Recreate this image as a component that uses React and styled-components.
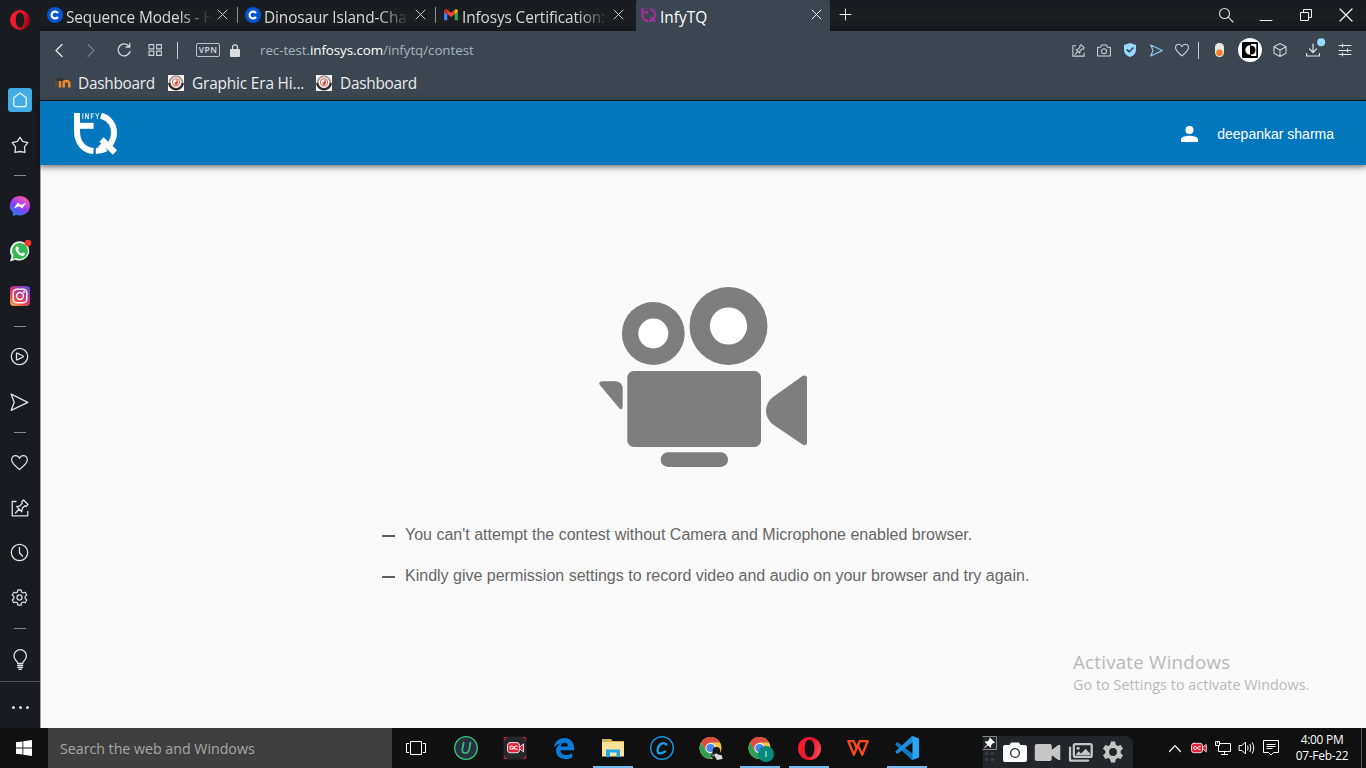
import React from "react";
import styled, { createGlobalStyle, css } from "styled-components";

const ui = `"Open Sans", "Noto Sans", sans-serif`;
const arial = `"Liberation Sans", Arial, sans-serif`;

const Global = createGlobalStyle`
  * { box-sizing: border-box; }
  html, body { margin: 0; padding: 0; background: #101010; overflow: hidden; }
  ul { list-style: none; margin: 0; padding: 0; }
`;

const Screen = styled.div`
  width: 1366px;
  height: 768px;
  display: flex;
  flex-direction: column;
  font-family: ${ui};
  overflow: hidden;
`;
const Browser = styled.div`
  display: flex;
  height: 728px;
  position: relative;
`;
const Glyph = styled.svg`
  display: block;
  flex: none;
  overflow: visible;
  width: ${(p) => p.$w || 16}px;
  height: ${(p) => p.$h || p.$w || 16}px;
  fill: none;
  stroke: ${(p) => p.$c || "none"};
  stroke-width: ${(p) => p.$s || 1.2};
  stroke-linejoin: ${(p) => (p.$sharp ? "miter" : "round")};
  stroke-linecap: ${(p) => (p.$sharp ? "butt" : "round")};
`;

/* ---------- sidebar ---------- */
const Sidebar = styled.nav`
  width: 40px;
  flex: none;
  background: #181b1f;
  display: flex;
  flex-direction: column;
`;
const OperaSlot = styled.div`
  height: 77px;
  padding: 10px 0 0 10px;
`;
const SideSlot = styled.div`
  height: 45px;
  padding: ${(p) => p.$top || 11}px 0 0 ${(p) => p.$left || 8}px;
`;
const SideRule = styled.div`
  height: 16px;
  padding: 8px 0 0 14px;
  &::before { content: ""; display: block; width: 12px; height: 1px; background: #7b8b99; }
`;
const HomeTile = styled.div`
  width: 24px;
  height: 24px;
  border-radius: 3px;
  background: #41ade4;
  display: flex;
  align-items: center;
  justify-content: center;
`;
const MoreSlot = styled.div`
  border-top: 1px solid #4b4f53;
  flex: 1;
  display: flex;
  gap: 4px;
  padding: 24px 0 0 12px;
  i { width: 3px; height: 3px; border-radius: 1.5px; background: #dce1e6; }
`;

/* ---------- tabs ---------- */
const Column = styled.div`
  flex: 1;
  min-width: 0;
  display: flex;
  flex-direction: column;
`;
const TabBar = styled.div`
  height: 31px;
  flex: none;
  display: flex;
  background: linear-gradient(#181b1f, #1b1f22 60%, #15181b);
`;
const Tab = styled.div`
  width: ${(p) => p.$w}px;
  height: 31px;
  flex: none;
  display: flex;
  padding: 7px 0 0 ${(p) => p.$pl}px;
  ${(p) => p.$active && css`background: #3b4650; border-radius: 2px 2px 0 0;`}
`;
const TabTitle = styled.div`
  width: ${(p) => p.$w}px;
  margin: 0 0 0 ${(p) => p.$ml || 3}px;
  height: 22px;
  line-height: 21px;
  font-size: 15.4px;
  letter-spacing: ${(p) => p.$ls || 0}px;
  white-space: nowrap;
  color: ${(p) => (p.$active ? "#fff" : "#d6d7d8")};
  ${(p) => !p.$active && css`mask-image: linear-gradient(90deg, #000 calc(100% - 32px), transparent);`}
`;
const TabClose = styled.div`
  margin: 3px 0 0 ${(p) => p.$ml}px;
`;
const TabSplit = styled.div`
  width: 1px;
  height: 16px;
  margin-top: 7px;
  background: #8b9298;
`;
const NewTab = styled.div`
  padding: 9px 0 0 10px;
`;
const WindowControls = styled.div`
  margin-left: auto;
  display: flex;
`;
const Control = styled.div`
  width: 40px;
  height: 30px;
  display: flex;
  align-items: center;
  justify-content: center;
  padding-bottom: ${(p) => p.$up || 0}px;
  padding-top: ${(p) => p.$down || 0}px;
`;

/* ---------- toolbar ---------- */
const Toolbar = styled.div`
  height: 38px;
  flex: none;
  background: #3b4650;
  display: flex;
  align-items: center;
  padding: 0 6px 0 3px;
`;
const Cell = styled.div`
  width: ${(p) => p.$w || 32}px;
  height: 38px;
  display: flex;
  flex: none;
  align-items: center;
  justify-content: center;
`;
const Split = styled.div`
  width: 1px;
  height: 17px;
  flex: none;
  background: #c4cacf;
  margin: 1px ${(p) => p.$mr}px 0 ${(p) => p.$ml}px;
`;
const Vpn = styled.div`
  width: 24px;
  height: 14px;
  border: 1px solid #b9c0c6;
  border-radius: 2px;
  color: #d7dce0;
  font-size: 8.5px;
  font-weight: 600;
  line-height: 12px;
  text-align: center;
  letter-spacing: 0.5px;
`;
const Address = styled.div`
  font-size: 13.4px;
  line-height: 20px;
  margin-left: 10px;
  letter-spacing: -0.08px;
  white-space: nowrap;
  color: #a7b3be;
  b { font-weight: 400; color: #fff; }
`;
const ToolbarRight = styled.div`
  margin-left: auto;
  display: flex;
  align-items: center;
`;
const Bookmarks = styled.div`
  height: 32px;
  flex: none;
  background: #3b4650;
  border-bottom: 1px solid #15171a;
  display: flex;
  padding: 5px 0 0 15px;
`;
const Bookmark = styled.div`
  display: flex;
  width: ${(p) => p.$w}px;
  gap: ${(p) => p.$gap || 8}px;
  font-size: 15.4px;
  line-height: 20px;
  letter-spacing: ${(p) => p.$ls}px;
  color: #e9ebec;
  white-space: nowrap;
  svg { margin-top: 1px; }
`;

/* ---------- page ---------- */
const Page = styled.main`
  flex: 1;
  display: flex;
  flex-direction: column;
  background: #fafafa;
  border-left: 1px solid #a3a3a3;
`;
const Header = styled.header`
  height: 64px;
  flex: none;
  margin-left: -1px;
  display: flex;
  align-items: center;
  padding: 1px 32px 0 33px;
  background: #0277bd;
  box-shadow: 0 2px 5px rgba(0, 0, 0, 0.45), 0 3px 10px rgba(0, 0, 0, 0.15);
`;
const User = styled.div`
  margin-left: auto;
  display: flex;
  align-items: center;
  gap: 19px;
  color: #fff;
  font: 14px/20px ${arial};
  span { padding-top: 1px; }
`;
const Notice = styled.section`
  display: flex;
  flex-direction: column;
  padding: 121px 0 0 341px;
`;
const Reasons = styled.ul`
  padding-top: 55px;
`;
const Reason = styled.li`
  display: flex;
  align-items: center;
  gap: 10px;
  height: 23px;
  margin-bottom: 18px;
  font: 16px/23px ${arial};
  color: #666;
  &::before { content: ""; width: 13px; height: 2px; margin-top: 2px; background: #5f5f5f; }
`;
const CameraBox = styled.div`
  padding-left: 217px;
`;
const Watermark = styled.div`
  position: absolute;
  left: 1073px;
  top: 649px;
  color: #b9b9b9;
  white-space: nowrap;
`;
const WatermarkTitle = styled.div`
  font-size: 18.7px;
  line-height: 26px;
  letter-spacing: 0.25px;
`;
const WatermarkText = styled.div`
  font-size: 14.3px;
  line-height: 20px;
  letter-spacing: 0.06px;
`;

/* ---------- taskbar ---------- */
const Taskbar = styled.footer`
  height: 40px;
  display: flex;
  background: #101010;
`;
const TaskCell = styled.div`
  width: ${(p) => p.$w || 48}px;
  margin-right: ${(p) => p.$mr || 0}px;
  height: 40px;
  flex: none;
  display: flex;
  align-items: center;
  justify-content: center;
  ${(p) => p.$running && css`
    background: linear-gradient(#76b9ed, #76b9ed) center bottom / 40px 2px no-repeat;
  `}
`;
const Search = styled.div`
  width: 344px;
  background: #3f3f3f;
  color: #a6a6a6;
  font-size: 14.2px;
  line-height: 42px;
  height: 40px;
  padding-left: 12px;
`;
const CaptureBar = styled.div`
  width: 150px;
  height: 32px;
  margin: 8px 0 0 51px;
  display: flex;
  align-items: center;
  background: #22262b;
  border-radius: 0 8px 0 0;
`;
const CapturePin = styled.div`
  width: 14px;
  height: 32px;
  margin-right: 6px;
`;
const CaptureCell = styled.div`
  width: ${(p) => p.$w}px;
  display: flex;
  justify-content: center;
`;
const Tray = styled.div`
  display: flex;
  padding-left: 30px;
`;
const Clock = styled.div`
  width: 78px;
  padding-top: 3px;
  text-align: center;
  color: #fff;
  font-size: 11.9px;
  line-height: 16px;
  letter-spacing: -0.25px;
`;
const ShowDesktop = styled.div`
  width: 1px;
  height: 40px;
  background: #5c5c5c;
`;

/* ---------- drawings ---------- */
const Close = ({ c = "#c9cccf", w = 9 }) => (
  <Glyph viewBox="0 0 10 10" $w={w} $c={c} $s={1.1}><path d="M0 0L10 10M10 0L0 10" /></Glyph>
);
const OperaLogo = ({ size, id }) => (
  <Glyph viewBox="0 0 20 20" $w={size}>
    <defs>
      <linearGradient id={id} x1="0" x2="1" y1="0.3" y2="0.6">
        <stop offset="0" stopColor="#ff1b2d" /><stop offset="0.55" stopColor="#e0162a" /><stop offset="1" stopColor={id === "op1" ? "#9c0010" : "#ff4b55"} />
      </linearGradient>
    </defs>
    <path fill={`url(#${id})`} fillRule="evenodd" d="M10 0a10 10 0 1 0 0 20a10 10 0 1 0 0-20zM10 2.4c2.6 0 4.2 3.4 4.2 7.6s-1.600 7.600-4.200 7.600s-4.200-3.400-4.200-7.600s1.600-7.600 4.200-7.600z" />
  </Glyph>
);
const Heart = ({ w, c, s }) => (
  <Glyph viewBox="0 0 18 18" $w={w} $c={c} $s={s}>
    <path d="M9 16.500C5.500 13.500 .7 10.300.7 6.200C.7 3.400 2.700 1.700 4.800 1.700C6.800 1.700 8.300 2.900 9 4.600C9.700 2.900 11.200 1.700 13.200 1.700C15.300 1.700 17.300 3.400 17.300 6.200C17.300 10.300 12.500 13.500 9 16.500Z" />
  </Glyph>
);
const PinBox = ({ w, c, s }) => (
  <Glyph viewBox="0 0 18 18" $w={w} $c={c} $s={s}>
    <path d="M5 2.500H1.200V16.800H16.800V12.500" />
    <path d="M4.500 14L8 10.200M5.700 7.600L10.700 12.700L11.300 9.300L13.600 7L15.200 7.300L17 5.500L12.500 1L10.800 2.700L11.100 4.400L8.900 6.800Z" />
  </Glyph>
);
const Send = ({ w, c, s }) => (
  <Glyph viewBox="0 0 18 18" $w={w} $c={c} $s={s}><path d="M1 1.500L17.200 9L1 16.500L4.200 9Z" /></Glyph>
);
const Coursera = () => (
  <Glyph viewBox="0 0 16 16">
    <circle cx="8" cy="8" r="8" fill="#0056d2" />
    <path d="M10.900 6.200A3.400 3.400 0 1 0 10.900 9.800" stroke="#fff" strokeWidth="2.200" strokeLinecap="butt" />
  </Glyph>
);
const Gmail = () => (
  <Glyph viewBox="0 0 16 14" $w={14} $h={12}>
    <path d="M0 3V13.200H3.700V6Z" fill="#4285f4" /><path d="M16 3V13.200H12.300V6Z" fill="#34a853" />
    <path d="M0 2.500C0 0 2.500-.3 3.700 1L8 4.400L12.300 1V6L8 9.300L3.700 6L0 3.200Z" fill="#ea4335" />
    <path d="M12.300 1C13.500-.3 16 0 16 2.500V3.200L12.300 6Z" fill="#fbbc04" />
    <path d="M0 2.500C0 1.200.8.500 1.800.4L3.700 1V6L0 3.200Z" fill="#c5221f" />
  </Glyph>
);
const TqMark = ({ w, h, c }) => (
  <Glyph viewBox="0 0 44 41" $w={w} $h={h} $c={c} $s={6} $sharp>
    <path d="M4 0V18C4 30 11 37.200 20.500 38" />
    <path d="M4 12.800H20.600" />
    <path d="M28 2.700C36.500 5.500 41 12 41 19.500C41 24.500 39.500 28.500 36.500 32" />
    <path d="M22.800 38C27 38 30 37 33 35.500M28.500 26.500L42 39.500M27 36L33.500 30" />
    <path strokeWidth="1.100" strokeOpacity="0.8" d="M9.800 .3V6M12.600 6V.3L15.400 6V.3M18.300 6V.8H21M18.300 3.200H20.600M22.500.3L24.300 3.200L26.100.3M24.300 3V6" />
  </Glyph>
);
const Seal = () => (
  <Glyph viewBox="0 0 16 16">
    <path fill="#f6f4f2" d="M0 0H16V16H0Z" />
    <circle cx="8" cy="7.500" r="6.300" stroke="#a39a96" strokeWidth="1.800" />
    <path d="M1.300 9Q3 14.300 8 14.300T14.700 9" stroke="#2f2b29" strokeWidth="2.400" />
    <circle cx="8" cy="7.300" r="3.600" stroke="#cf7767" strokeWidth="1.100" />
    <path d="M8.500 4C10.800 6.500 10.400 8.500 8 10.300C5.700 8.500 6.600 7 7.500 7.300C8.600 6.500 8.800 5.500 8.500 4Z" fill="#d6472a" />
  </Glyph>
);
const Moodle = () => (
  <Glyph viewBox="0 0 16 16" $sharp>
    <path d="M0 4.500L7 2.500L9 5L4 6.500Z" fill="#3a332f" />
    <path d="M1 6V11" stroke="#725b45" strokeWidth="1" />
    <path d="M5 12.500V6M8.700 12.500V8Q8.700 6 11.200 6T14.300 8V12.500" stroke="#ee8a2b" strokeWidth="2.500" />
  </Glyph>
);
const GearShape = ({ w, c, s }) => (
  <Glyph viewBox="0 0 18 18" $w={w} $c={c} $s={s}>
    <path d="M7.300 1H10.700L11.100 3.200L12.900 4.200L15 3.400L16.700 6.300L15 7.800V10.200L16.700 11.700L15 14.600L12.900 13.800L11.100 14.800L10.700 17H7.300L6.900 14.800L5.100 13.800L3 14.600L1.300 11.700L3 10.200V7.800L1.300 6.300L3 3.400L5.100 4.200L6.900 3.200Z" />
    <circle cx="9" cy="9" r="2.700" />
  </Glyph>
);
const ChromeLogo = ({ children }) => (
  <Glyph viewBox="0 0 24 24" $w={24}>
    <circle cx="11.500" cy="12" r="11" fill="#f6c443" />
    <path d="M11.500 12V6.500H21A11 11 0 0 0 2 6.500L6.700 14.700Z" fill="#dd4b3e" />
    <path d="M2 6.500A11 11 0 0 0 11.500 23L16.200 14.700L11.500 17L6.700 14.700Z" fill="#2f9e56" />
    <circle cx="11.500" cy="12" r="5.200" fill="#f1f1f1" /><circle cx="11.500" cy="12" r="4.100" fill="#4788f0" />
    {children}
  </Glyph>
);
const RedCamShape = () => (
  <g strokeLinejoin="round">
    <path d="M11 6L15.300 2.500V9.500Z" fill="#e5233d" stroke="#fff" strokeWidth=".8" />
    <rect x=".5" y="1.300" width="11" height="9.400" rx="2.400" fill="#e5233d" stroke="#fff" strokeWidth=".8" />
    <path d="M9.300 4.500Q7.400 4.400 6.300 6Q5.300 7.500 4.200 7.500A1.500 1.500 0 0 1 4.200 4.500Q5.300 4.500 6.300 6Q7.400 7.600 9.300 7.500" stroke="#fff" strokeWidth="1" />
  </g>
);

const side = "#dce2e7";

function SidebarPanel() {
  return (
    <Sidebar>
      <OperaSlot><OperaLogo size={20} id="op1" /></OperaSlot>
      <SideSlot>
        <HomeTile>
          <Glyph viewBox="0 0 16 16" $w={16} $c="#e6f6ff" $s={1.300}><path d="M8 1L14.300 5.800V12.500Q14.300 14.700 12.200 14.700H3.800Q1.700 14.700 1.700 12.500V5.800Z" /></Glyph>
        </HomeTile>
      </SideSlot>
      <SideSlot><Glyph viewBox="0 0 24 24" $w={24} $c={side} $s={1.300}><path d="M12 4.300L14.700 8.300L19.800 9.700L16.500 13.900L17 19.300L12 18.500L7 19.300L7.500 13.900L4.200 9.700L9.300 8.300Z" /></Glyph></SideSlot>
      <SideRule />
      <SideSlot>
        <Glyph viewBox="0 0 24 24" $w={24}>
          <defs><linearGradient id="ms" x1="0.200" y1="1" x2="0.800" y2="0"><stop offset="0" stopColor="#1688f5" /><stop offset=".45" stopColor="#8c3df5" /><stop offset=".75" stopColor="#d84bd2" /><stop offset="1" stopColor="#f8637a" /></linearGradient></defs>
          <path fill="url(#ms)" d="M12 2A10 9.700 0 1 1 8.500 20.800L5 22V18.800A10 9.700 0 0 1 12 2Z" />
          <path fill="#fff" d="M5.800 14.500L9.800 8.500L13 11L18.200 8.700L14.200 14.500L11 12.300Z" />
        </Glyph>
      </SideSlot>
      <SideSlot>
        <Glyph viewBox="0 0 24 24" $w={24}>
          <path fill="#e9efec" d="M12.300 2.200A9.700 9.700 0 1 1 7.500 20.700L2 22.500L3.500 17A9.700 9.700 0 0 1 12.300 2.200Z" />
          <path fill="#35b954" d="M12.300 4A8 8 0 1 1 8 19L4.700 20L5.500 16.500A8 8 0 0 1 12.300 4Z" />
          <path fill="#fff" d="M8.700 7.500L10.200 7.800L11 10L10 11.200Q11.500 14 13.700 14.600L15 13.400L17 14.600Q16.500 17 14.500 17Q9.500 16.300 7.500 10.500Q7.300 8.500 8.700 7.500Z" />
          <circle cx="20" cy="4" r="3.300" fill="#f8352f" />
        </Glyph>
      </SideSlot>
      <SideSlot>
        <Glyph viewBox="0 0 24 24" $w={24}>
          <defs><linearGradient id="ig" x1="0" y1="1" x2="0.700" y2="0"><stop offset="0" stopColor="#fdc04f" /><stop offset=".35" stopColor="#ee4a45" /><stop offset=".7" stopColor="#c4318c" /><stop offset="1" stopColor="#6b4bd0" /></linearGradient></defs>
          <rect x="2" y="2" width="20" height="20" rx="4" fill="url(#ig)" />
          <rect x="5.200" y="5.200" width="13.600" height="13.600" rx="3.800" stroke="#fff" strokeWidth="1.500" />
          <circle cx="12" cy="12" r="3.400" stroke="#fff" strokeWidth="1.500" /><circle cx="16" cy="8" r="1" fill="#fff" />
        </Glyph>
      </SideSlot>
      <SideRule />
      <SideSlot><Glyph viewBox="0 0 24 24" $w={24} $c={side} $s={1.300}><circle cx="11.500" cy="11.500" r="8.200" /><path d="M8.500 8.500Q8.500 7.900 9.200 8.200L15 11Q15.700 11.500 15 12L9.200 14.800Q8.500 15.100 8.500 14.500Z" /></Glyph></SideSlot>
      <SideSlot><Glyph viewBox="0 0 24 24" $w={24} $c={side} $s={1.300}><path d="M3.200 4.200L19.800 12.300L3.200 20.300L6.200 12.300Z" /></Glyph></SideSlot>
      <SideRule />
      <SideSlot $top={14} $left={11}><Heart w={17} c={side} s={1.300} /></SideSlot>
      <SideSlot $top={14} $left={11}><PinBox w={18} c={side} s={1.300} /></SideSlot>
      <SideSlot><Glyph viewBox="0 0 24 24" $w={24} $c={side} $s={1.300}><circle cx="11.500" cy="11.500" r="8.200" /><path d="M11.500 6.500V12L14.500 15" /></Glyph></SideSlot>
      <SideSlot $top={14} $left={11}><GearShape w={17} c={side} s={1.300} /></SideSlot>
      <SideRule />
      <SideSlot $top={12}><Glyph viewBox="0 0 24 24" $w={24} $c={side} $s={1.300}><path d="M9.700 15.500Q9.700 14 7.800 12.200A6.200 6.200 0 1 1 16.600 12.200Q14.700 14 14.700 15.500ZM9.700 17.500H14.700M9.900 19.500H14.500M11 21.300H13.400" /></Glyph></SideSlot>
      <MoreSlot><i /><i /><i /></MoreSlot>
    </Sidebar>
  );
}

function Tabs() {
  return (
    <TabBar>
      <Tab $w={197} $pl={7}><Coursera /><TabTitle $w={146} $ls={-0.12}>Sequence Models - H</TabTitle><TabClose $ml={6}><Close /></TabClose></Tab>
      <TabSplit />
      <Tab $w={197} $pl={7}><Coursera /><TabTitle $w={146} $ls={-0.12}>Dinosaur Island-Cha</TabTitle><TabClose $ml={6}><Close /></TabClose></Tab>
      <TabSplit />
      <Tab $w={200} $pl={8}><div style={{ paddingTop: 2 }}><Gmail /></div><TabTitle $w={147} $ml={4} $ls={-0.12}>Infosys Certification:</TabTitle><TabClose $ml={5}><Close /></TabClose></Tab>
      <Tab $w={194} $pl={5} $active><TqMark w={15} h={16} c="#a52fa0" /><TabTitle $w={147} $ml={4} $active $ls={0.05}>InfyTQ</TabTitle><TabClose $ml={5}><Close c="#eef0f1" /></TabClose></Tab>
      <NewTab><Glyph viewBox="0 0 11 11" $w={11} $c="#eceeef" $s={1}><path d="M5.500 0V11M0 5.500H11" /></Glyph></NewTab>
      <WindowControls>
        <Control $up={1}><Glyph viewBox="0 0 14 14" $w={14} $c="#dfe2e4" $s={1.100}><circle cx="5.500" cy="5.500" r="5" /><path d="M9.200 9.200L14 14" /></Glyph></Control>
        <Control><Glyph viewBox="0 0 12 12" $w={12} $c="#eceeef" $s={1}><path d="M0 11.500H12" /></Glyph></Control>
        <Control><Glyph viewBox="0 0 12 12" $w={12} $c="#eceeef" $s={1} $sharp><path d="M.5 3.500H8.500V11.500H.5ZM3.500 3V.5H11.500V8.500H9" /></Glyph></Control>
        <Control><Close c="#eceeef" w={12} /></Control>
      </WindowControls>
    </TabBar>
  );
}

function AddressBar() {
  const t = "#cbd2d8";
  return (
    <Toolbar>
      <Cell $w={31}><Glyph viewBox="0 0 8 13" $w={8} $h={13} $c="#e6e9eb" $s={1.300}><path d="M7 .5L1 6.500L7 12.500" /></Glyph></Cell>
      <Cell $w={34}><Glyph viewBox="0 0 8 13" $w={8} $h={13} $c="#737d86" $s={1.200}><path d="M1 .5L7 6.500L1 12.500" /></Glyph></Cell>
      <Cell $w={31}><Glyph viewBox="0 0 14 14" $w={14} $c="#d5dade" $s={1.300}><path d="M12 3.300A6 6 0 1 0 13 8.500M12.800 .5V4H9" /></Glyph></Cell>
      <Cell><Glyph viewBox="0 0 14 12" $w={14} $h={12} $c={t} $s={1.100}><path d="M1 .6H5.800V4.900H1ZM8.600 .6H13.400V4.900H8.600ZM1 7.100H5.800V11.400H1ZM8.600 7.100H13.400V11.400H8.600Z" /></Glyph></Cell>
      <Split $ml={6} $mr={18} />
      <Vpn>VPN</Vpn>
      <Cell $w={30}><Glyph viewBox="0 0 10 13" $w={10} $h={13}><rect y="5" width="10" height="8" rx="1" fill="#d9dde0" /><path d="M2.500 5V3.300A2.500 2.500 0 0 1 7.500 3.300V5" stroke="#d9dde0" strokeWidth="1.300" /></Glyph></Cell>
      <Address>rec-test.<b>infosys.com</b>/infytq/contest</Address>
      <ToolbarRight>
        <Cell $w={26}><PinBox w={13} c={t} s={1.500} /></Cell>
        <Cell $w={26}><Glyph viewBox="0 0 15 14" $w={14} $h={13} $c={t} $s={1.100}><path d="M.6 3.500H3.800L5 1H10L11.200 3.500H14.400V12.800H.6Z" /><circle cx="7.500" cy="7.900" r="2.700" /></Glyph></Cell>
        <Cell $w={26}><Glyph viewBox="0 0 12 14" $w={12} $h={14}><path fill="#97d9ff" d="M6 0L12 2V7Q12 12 6 14Q0 12 0 7V2Z" /><path d="M3.200 6.800L5.300 8.800L9 5" stroke="#3b4650" strokeWidth="1.600" /></Glyph></Cell>
        <Cell $w={26}><Send w={13} c="#8ecdf2" s={1.600} /></Cell>
        <Cell $w={26}><Heart w={14} c={t} s={1.400} /></Cell>
        <Split $ml={3} $mr={4} />
        <Cell $w={32}><Glyph viewBox="0 0 9 14" $w={9} $h={14}><rect width="9" height="14" rx="4.200" fill="#e8e6e3" /><circle cx="4.500" cy="9.700" r="3.300" fill="#fa7b2b" /></Glyph></Cell>
        <Cell $w={30}><Glyph viewBox="0 0 24 24" $w={24}><circle cx="12" cy="12" r="12" fill="#fff" /><rect x="4" y="4" width="16" height="16" rx="1.300" fill="#000" /><path d="M13 6H18.300V18H13Z" fill="#fff" /><circle cx="12" cy="12" r="4.700" fill="#fff" /><path d="M12 7.500H13A4.500 4.500 0 0 1 13 16.500H12Z" fill="#000" /></Glyph></Cell>
        <Cell $w={30}><Glyph viewBox="0 0 14 14" $w={14} $c={t} $s={1.100}><path d="M7 .5L13 3.700V10.300L7 13.500L1 10.300V3.700ZM1 3.700L7 7L13 3.700M7 7V13.500" /></Glyph></Cell>
        <Cell $w={35}><Glyph viewBox="0 0 14 14" $w={14} $c="#dde1e4" $s={1.200}><path d="M7 1V9.500M3.500 6L7 9.500L10.500 6M.6 10.500V13H13.400V10.500" /><circle cx="15.200" cy="-.8" r="4" fill="#97d9ff" stroke="none" /></Glyph></Cell>
        <Cell $w={30}><Glyph viewBox="0 0 12 12" $w={12} $c="#e6e9eb" $s={1}><path d="M0 1.500H12M0 6.500H12M0 10.500H12M3.500 0V3M8.500 5V8M3.500 9V12" /></Glyph></Cell>
      </ToolbarRight>
    </Toolbar>
  );
}

function Camera() {
  return (
    <Glyph viewBox="599 286 210 182" $w={210} $h={182}>
      <g fill="#7e7e7e">
        <circle cx="653.300" cy="333.500" r="31.400" /><circle cx="728.500" cy="326" r="39" />
        <rect x="627.300" y="371" width="133.700" height="76" rx="6.500" />
        <rect x="660.700" y="452.300" width="67.300" height="14.700" rx="7.300" />
        <path d="M602 381.200H615.500Q622.700 381.700 622.700 389V407Q622.300 410.500 619.500 408.500L599.800 385Q598 381.800 602 381.200Z" />
        <path d="M773 397L802.500 376Q807 374.500 807 378.500V442.500Q807 446.300 802.500 444.500L773 424.500Q766.200 419 766 411Q766.200 402 773 397Z" />
      </g>
      <circle cx="653.300" cy="333.500" r="15" fill="#fff" /><circle cx="728.500" cy="326" r="18.600" fill="#fff" />
    </Glyph>
  );
}

function TaskbarPanel() {
  return (
    <Taskbar>
      <TaskCell><Glyph viewBox="0 0 16 16" $w={16}><path fill="#fff" d="M0 2.300L6.500 1.400V7.600H0ZM7.300 1.300L16 0V7.600H7.300ZM0 8.400H6.500V14.600L0 13.700ZM7.300 8.400H16V16L7.300 14.700Z" /></Glyph></TaskCell>
      <Search>Search the web and Windows</Search>
      <TaskCell $mr={2}><Glyph viewBox="0 0 20 14" $w={20} $h={14} $c="#fff" $s={1} $sharp><path d="M4.500 .5H15.500V13.500H4.500ZM3 2.500H.5V11.500H3M17 2.500H19.500V11.500H17" /></Glyph></TaskCell>
      <TaskCell $mr={1}><Glyph viewBox="0 0 24 24" $w={24}><circle cx="12" cy="12" r="11.300" fill="#2a2f3d" stroke="#2ecc80" strokeWidth="1.300" /><path d="M9.700 6.500L8.300 13.500Q8 17 11.200 17T15.200 13.500L16.500 6.500" stroke="#2fc07a" strokeWidth="1.700" /></Glyph></TaskCell>
      <TaskCell $mr={1}>
        <Glyph viewBox="0 0 24 24" $w={24}><rect x=".5" y=".5" width="23" height="23" rx="2" fill="#24282b" /><path d="M1.500 4V1.500H4M20 1.500H22.500V4M22.500 20V22.500H20M4 22.500H1.500V20" stroke="#b52430" strokeWidth="1.200" /><g transform="translate(4 5.200) scale(1.080)"><RedCamShape /></g></Glyph>
      </TaskCell>
      <TaskCell $mr={1}><Glyph viewBox="0 0 20 21" $w={20} $h={21}><path fill="#0a7bd7" d="M0 9.500C.8 3.500 5 0 10.300 0C16.500 0 20 4.500 20 9.700V12.300H6.500C6.600 15.600 9 17 12 17C14.500 17 16.500 16.300 18.300 15.200V19.500C16.300 20.600 14 21 11.400 21C5.500 21 2 17.500 2 12.800C2 9.500 3.800 6.800 6.800 5.500C4.200 5.800 1.700 7.500 0 9.500ZM6.700 8.600H14C14 6 12.600 4.700 10.500 4.700C8.300 4.700 7 6.300 6.700 8.600Z" fillRule="evenodd" /></Glyph></TaskCell>
      <TaskCell $mr={1} $running><Glyph viewBox="0 0 22 18" $w={22} $h={18}><path fill="#e0b53e" d="M0 0H9L10.500 2H22V17H0Z" /><path fill="#fbe19a" d="M0 3H22V17.500H0Z" /><path fill="#4fbff0" d="M2 .8H5V2H2Z" /><path fill="#22a9e5" d="M4 10.500H18V18H14.500V13.500H8V18H4Z" /></Glyph></TaskCell>
      <TaskCell $mr={1}><Glyph viewBox="0 0 24 24" $w={24}><circle cx="12" cy="12" r="11.300" stroke="#1497e0" strokeWidth="1.400" /><path d="M16.300 8.500Q14.500 6.300 11.500 7.600T7.700 13.300T10.500 17.200T15 15.500" stroke="#1b9de5" strokeWidth="2.400" /></Glyph></TaskCell>
      <TaskCell $mr={1}><ChromeLogo><circle cx="17.500" cy="14.800" r="3.800" fill="#171412" /><path fill="#15181a" d="M12 20L14 15L22 16.500L24 23H14Z" /><path fill="#d6d8d9" d="M15 19Q17 16.500 19 18.500L23 19.500L23.500 23L18 24Z" /><path fill="#6d7479" d="M12.500 17.500L15.500 18.500L14 22Z" /></ChromeLogo></TaskCell>
      <TaskCell $mr={1} $running><ChromeLogo><circle cx="18" cy="18" r="8" fill="#04897b" /><path d="M18 15.500V20.500" stroke="#9bd5ce" strokeWidth="1.500" /></ChromeLogo></TaskCell>
      <TaskCell $mr={1} $running><OperaLogo size={23} id="op2" /></TaskCell>
      <TaskCell $mr={1}><Glyph viewBox="0 0 22 16" $w={22} $h={16} $s={2.300} $c="#fa4a16"><path d="M9.300 7.500L6.800 1.200H1.300L6.900 14.700L12.700 1.200H20.700L15.200 14.700L11.200 6" /></Glyph></TaskCell>
      <TaskCell $mr={1} $running><Glyph viewBox="0 0 24 24" $w={24}><path fill="#1177bd" d="M1.500 6.500L3 6.500L18 18V24H17L.3 8.700Z" /><path fill="#1a8ddb" d="M1.500 17.500L.3 15.500L17 0H18V6L3 17.500Z" /><path fill="#2aa6f2" d="M17.500 0L24 2.500V21.500L17.500 24Z" /></Glyph></TaskCell>
      <CaptureBar>
        <CapturePin>
          <Glyph viewBox="0 0 14 32" $w={14} $h={32}>
            <path d="M0 .5H13.500V13.500H0" stroke="#8a8a8a" strokeWidth="1" />
            <path fill="#fff" d="M7 1.500L12 6.500L11 7.300L10 7L8 9.300L8.200 11L7.500 11.700L5 9.200L1.500 12.300L1 12L4.200 8.500L1.800 6L2.500 5.300L4.500 5.400L6.600 3.300L6.300 2.200Z" />
            <g fill="#393d42"><circle cx="3.500" cy="17.500" r="1.800" /><circle cx="9.500" cy="17.500" r="1.800" /><circle cx="3.500" cy="23.500" r="1.800" /><circle cx="9.500" cy="23.500" r="1.800" /></g>
          </Glyph>
        </CapturePin>
        <CaptureCell $w={25}><Glyph viewBox="0 0 24 20" $w={24} $h={20}><path fill="#fff" fillRule="evenodd" d="M2 3H6.500L8 .5H16L17.500 3H22Q24 3 24 5V18Q24 20 22 20H2Q0 20 0 18V5Q0 3 2 3ZM12 6A5 5 0 1 0 12 16A5 5 0 1 0 12 6Z" /><circle cx="12" cy="11" r="3.700" fill="#fff" /></Glyph></CaptureCell>
        <CaptureCell $w={41}><Glyph viewBox="0 0 27 18" $w={27} $h={17}><path fill="#c6c6c6" d="M2 0H16Q18 0 18 2V6L25 1H27V17H25L18 12V16Q18 18 16 18H2Q0 18 0 16V2Q0 0 2 0Z" /></Glyph></CaptureCell>
        <CaptureCell $w={26}><Glyph viewBox="0 0 26 20" $w={25} $h={19}><path d="M2 5V18.500H21" stroke="#c6c6c6" strokeWidth="2.400" /><rect x="6" y="1.200" width="18.800" height="13.500" rx="1.500" stroke="#c6c6c6" strokeWidth="2.400" /><path fill="#c6c6c6" d="M8 12.500L11 8.500L13.500 11L18.500 6L23 11V13H8Z" /><circle cx="10.500" cy="5.500" r="1.600" fill="#c6c6c6" /></Glyph></CaptureCell>
        <CaptureCell $w={40}><Glyph viewBox="0 0 18 18" $w={22}><path fillRule="evenodd" fill="#c6c6c6" d="M7.300 .5H10.700L11.300 3L12.900 4L15.300 3.200L17.200 6.300L15.300 8V10L17.200 11.700L15.300 14.800L12.900 14L11.300 15L10.700 17.500H7.300L6.700 15L5.100 14L2.700 14.800L.8 11.700L2.700 10V8L.8 6.300L2.700 3.200L5.100 4L6.700 3ZM9 5.800A3.200 3.200 0 1 0 9 12.200A3.200 3.200 0 1 0 9 5.800Z" /></Glyph></CaptureCell>
      </CaptureBar>
      <Tray>
        <TaskCell $w={24}><Glyph viewBox="0 0 12 7" $w={12} $h={7} $c="#fff" $s={1.200}><path d="M.5 6.500L6 .7L11.500 6.500" /></Glyph></TaskCell>
        <TaskCell $w={24}><Glyph viewBox="0 0 16 12" $w={16} $h={12}><RedCamShape /></Glyph></TaskCell>
        <TaskCell $w={24}><Glyph viewBox="0 0 16 14" $w={16} $h={14} $c="#fff" $s={1} $sharp><path d="M5 2.500H15.500V10.500H3.500V5M9.500 10.500V13M6 13.500H13M.5 .5H4.500V4.500H.5ZM2.500 .5V2.500" /></Glyph></TaskCell>
        <TaskCell $w={24}><Glyph viewBox="0 0 16 14" $w={16} $h={14} $c="#fff" $s={1}><path d="M.5 4.500H3L6.500 1V13L3 9.500H.5ZM8.700 5Q9.800 7 8.700 9M11 3.300Q13 7 11 10.700M13.400 1.800Q16.300 7 13.400 12.200" /></Glyph></TaskCell>
        <TaskCell $w={24}><Glyph viewBox="0 0 16 16" $w={16} $c="#fff" $s={1} $sharp><path d="M.5 .5H15.500V12.500H10.500L8 15L5.500 12.500H.5ZM3.500 4.500H12.500M3.500 6.500H12.500M3.500 8.500H9.500" /></Glyph></TaskCell>
        <Clock>4:00 PM<br />07-Feb-22</Clock>
        <ShowDesktop />
      </Tray>
    </Taskbar>
  );
}

export default function App() {
  return (
    <Screen>
      <Global />
      <Browser>
        <SidebarPanel />
        <Column>
          <Tabs />
          <AddressBar />
          <Bookmarks>
            <Bookmark $w={113} $gap={7} $ls={-0.27}><Moodle />Dashboard</Bookmark>
            <Bookmark $w={148} $ls={-0.16}><Seal />Graphic Era Hi...</Bookmark>
            <Bookmark $w={110} $ls={-0.27}><Seal />Dashboard</Bookmark>
          </Bookmarks>
          <Page>
            <Header>
              <TqMark w={44} h={41} c="#fff" />
              <User>
                <Glyph viewBox="0 0 17 16" $w={17} $h={16}><circle cx="8.500" cy="4" r="4" fill="#fff" /><path fill="#fff" d="M0 16V13.500C0 10.500 5.500 9.700 8.500 9.700S17 10.500 17 13.500V16Z" /></Glyph>
                <span>deepankar sharma</span>
              </User>
            </Header>
            <Notice>
              <CameraBox><Camera /></CameraBox>
              <Reasons>
                <Reason>You can't attempt the contest without Camera and Microphone enabled browser.</Reason>
                <Reason>Kindly give permission settings to record video and audio on your browser and try again.</Reason>
              </Reasons>
            </Notice>
          </Page>
        </Column>
        <Watermark>
          <WatermarkTitle>Activate Windows</WatermarkTitle>
          <WatermarkText>Go to Settings to activate Windows.</WatermarkText>
        </Watermark>
      </Browser>
      <TaskbarPanel />
    </Screen>
  );
}
